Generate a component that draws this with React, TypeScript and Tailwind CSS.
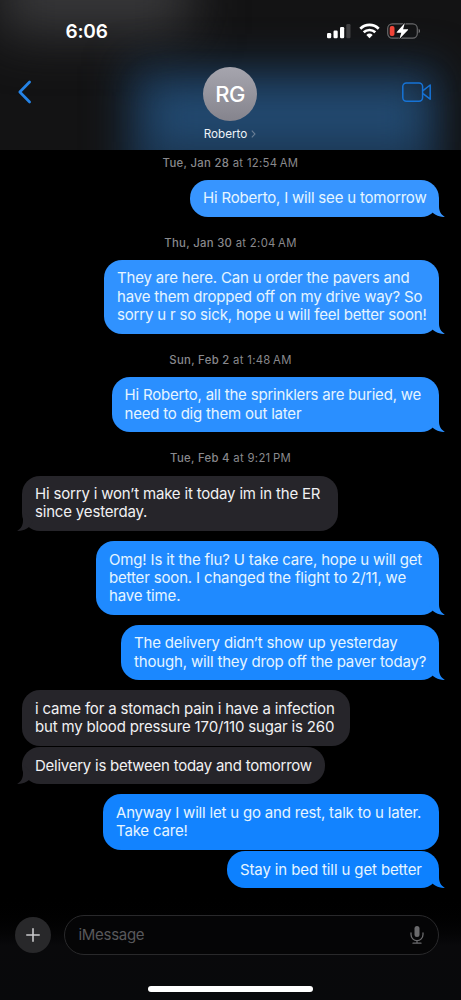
import clsx from "clsx";

// ── Data ────────────────────────────────────────────────────────────────────
type Item =
  | { kind: "stamp"; day: string; time: string; box: string }
  | {
      kind: "msg";
      from: "me" | "them";
      lines: string[];
      box: string; // spacing, size and fill of the bubble
      tail?: boolean;
    };

const thread: Item[] = [
  { kind: "stamp", day: "Tue, Jan 28", time: "at 12:54\u202fAM", box: "mt-[4.8px]" },
  {
    kind: "msg",
    from: "me",
    lines: ["Hi Roberto, I will see u tomorrow"],
    box: "mt-[9px] w-[249px] h-[37.3px] bg-[#3795ff] text-[#3795ff] tracking-[-0.2px]",
    tail: true,
  },
  { kind: "stamp", day: "Thu, Jan 30", time: "at 2:04\u202fAM", box: "mt-[17.5px]" },
  {
    kind: "msg",
    from: "me",
    lines: [
      "They are here. Can u order the pavers and",
      "have them dropped off on my drive way? So",
      "sorry u r so sick, hope u will feel better soon!",
    ],
    box: "mt-[9.4px] w-[335px] h-[73.6px] bg-[#3092ff] text-[#3092ff] tracking-[-0.18px]",
    tail: true,
  },
  { kind: "stamp", day: "Sun, Feb 2", time: "at 1:48\u202fAM", box: "mt-[18px]" },
  {
    kind: "msg",
    from: "me",
    lines: ["Hi Roberto, all the sprinklers are buried, we", "need to dig them out later"],
    box: "mt-[9.4px] w-[327.5px] h-[55.4px] bg-[#2a8fff] text-[#2a8fff] tracking-[-0.2px]",
    tail: true,
  },
  { kind: "stamp", day: "Tue, Feb 4", time: "at 9:21\u202fPM", box: "mt-[17.7px]" },
  {
    kind: "msg",
    from: "them",
    lines: ["Hi sorry i won’t make it today im in the ER", "since yesterday."],
    box: "mt-[9.5px] w-[316px] h-[55.4px] bg-[#26252a] text-[#26252a] tracking-[-0.18px]",
    tail: true,
  },
  {
    kind: "msg",
    from: "me",
    lines: [
      "Omg! Is it the flu? U take care, hope u will get",
      "better soon. I changed the flight to 2/11, we",
      "have time.",
    ],
    box: "mt-[10.3px] w-[343px] h-[73.5px] bg-[#1f8aff] text-[#1f8aff] tracking-[-0.16px]",
    tail: true,
  },
  {
    kind: "msg",
    from: "me",
    lines: ["The delivery didn’t show up yesterday", "though, will they drop off the paver today?"],
    box: "mt-[10.2px] w-[318px] h-[55.4px] bg-[#1b88ff] text-[#1b88ff] tracking-[-0.17px]",
    tail: true,
  },
  {
    kind: "msg",
    from: "them",
    lines: ["i came for a stomach pain i have a infection", "but my blood pressure 170/110 sugar is 260"],
    box: "mt-[9.9px] w-[327.5px] h-[55.4px] bg-[#26252a] text-[#26252a] tracking-[-0.17px]",
  },
  {
    kind: "msg",
    from: "them",
    lines: ["Delivery is between today and tomorrow"],
    box: "mt-[1.6px] w-[303px] h-[37.3px] bg-[#26252a] text-[#26252a] tracking-[-0.25px]",
    tail: true,
  },
  {
    kind: "msg",
    from: "me",
    lines: ["Anyway I will let u go and rest, talk to u later.", "Take care!"],
    box: "mt-[10px] w-[336px] h-[55.2px] bg-[#1283ff] text-[#1283ff] tracking-[-0.19px]",
  },
  {
    kind: "msg",
    from: "me",
    lines: ["Stay in bed till u get better"],
    box: "mt-[1.5px] w-[212px] h-[37.3px] bg-[#0d81ff] text-[#0d81ff] tracking-[-0.12px]",
    tail: true,
  },
];

// ── Icons ───────────────────────────────────────────────────────────────────
function SignalIcon() {
  return (
    <svg width="24" height="17" viewBox="0 0 24 17" fill="#fff">
      <rect x="0" y="11" width="4.2" height="5.2" rx="1.2" />
      <rect x="6.5" y="8.5" width="4.2" height="7.7" rx="1.2" />
      <rect x="13" y="5" width="4.2" height="11.2" rx="1.2" />
      <rect x="19.3" y="2" width="4.2" height="14.2" rx="1.2" fill="#3f3f41" />
    </svg>
  );
}

function WifiIcon() {
  return (
    <svg width="21" height="17" viewBox="0 0 21 17" fill="none" stroke="#fff" strokeWidth="2.7">
      <path d="M1.3 6.7C6.5 1.6 14.5 1.6 19.7 6.7" />
      <path d="M4.7 10.3C8 7.2 13 7.2 16.3 10.3" />
      <path d="M7.3 12.9Q10.5 10.1 13.7 12.9L10.5 16.2Z" fill="#fff" stroke="none" />
    </svg>
  );
}

function BatteryIcon() {
  return (
    <svg width="34" height="18" viewBox="0 0 34 18" fill="none">
      <rect x="0.7" y="1.8" width="29.6" height="14.4" rx="4.6" stroke="#68686a" strokeWidth="1.2" />
      <path d="M31.7 6.8c1.8.7 1.8 3.7 0 4.4z" fill="#79797b" />
      <rect x="2.7" y="4" width="4.8" height="10" rx="2" fill="#f04438" />
      <path
        d="M17.8 1 9.8 9.9c-.3.4-.1.8.4.8h4.1L12.4 17l8.6-9c.3-.4.1-.8-.4-.8h-4.5z"
        fill="#fff"
        stroke="#151517"
        strokeWidth="1.8"
        paintOrder="stroke"
      />
    </svg>
  );
}

function VideoIcon() {
  return (
    <svg width="30" height="21" viewBox="0 0 30 21" fill="none" stroke="#1673d6" strokeWidth="1.5" strokeLinejoin="round">
      <rect x="0.8" y="1" width="19.8" height="18.2" rx="3.6" />
      <path d="M21 8.6 28.2 3V17.2L21 11.6" />
    </svg>
  );
}

function MicIcon() {
  return (
    <svg width="14" height="20" viewBox="0 0 14 20" fill="none" stroke="#6a6a6c" strokeWidth="1.3" strokeLinecap="round">
      <rect x="4.5" y="1" width="5" height="11" rx="2.5" fill="#6a6a6c" stroke="none" />
      <path d="M1 8v1.6a6 6 0 0 0 12 0V8M7 15.6v2.6M3 18.2h8" />
    </svg>
  );
}

// ── Thread ──────────────────────────────────────────────────────────────────
function Tail({ side }: { side: "me" | "them" }) {
  return (
    <svg
      width="24"
      height="20"
      viewBox="0 0 24 20"
      fill="currentColor"
      className={clsx("absolute bottom-0", side === "me" ? "-right-[6px]" : "-left-[5px] -scale-x-100")}
    >
      <path d="M18 1V9.5C18 14 20 18 24 19.8 19.5 20.4 15 18.6 12 16L8 10Z" />
    </svg>
  );
}

function Thread() {
  return (
    <main className="flex h-[741px] flex-col px-[22px]">
      {thread.map((item, i) =>
        item.kind === "stamp" ? (
          <div
            key={i}
            className={clsx(
              "h-4 shrink-0 text-center text-[11.3px] leading-4 tracking-[0.32px] whitespace-nowrap text-[#89898d]",
              item.box
            )}
          >
            <span className="font-medium">{item.day}</span> {item.time}
          </div>
        ) : (
          <div
            key={i}
            className={clsx(
              "relative flex shrink-0 flex-col justify-center rounded-[18px] px-[13px]",
              item.from === "me" ? "self-end" : "self-start",
              item.box
            )}
          >
            {item.tail && <Tail side={item.from} />}
            {item.lines.map((line) => (
              <p
                key={line}
                className={clsx(
                  "relative text-[15px] leading-[18.2px] whitespace-nowrap",
                  item.from === "me" ? "text-[#e6f5ff]" : "text-[#f1f1f3]"
                )}
              >
                {line}
              </p>
            ))}
          </div>
        )
      )}
    </main>
  );
}

// ── Header ──────────────────────────────────────────────────────────────────
function Header() {
  return (
    <header className="relative h-[150px] shrink-0 overflow-hidden bg-[#131314]">
      {/* Colour of the content that scrolls under the bar */}
      <div className="absolute -top-12 left-0 h-[82px] w-[190px] bg-[#38383a] blur-[26px]" />
      <div className="absolute top-[66px] left-[126px] h-[150px] w-[314px] bg-[#1b3550] blur-[20px]" />
      <div className="absolute top-[92px] left-[155px] h-[50px] w-[265px] bg-[#25527f]/70 blur-[18px]" />

      <div className="relative flex h-[62px] items-start justify-between pt-[22px] pr-[40px] pl-[65.5px]">
        <span className="text-[19px] leading-[20px] font-semibold tracking-[-0.2px] text-white">6:06</span>
        <div className="flex items-start gap-[7.5px]">
          <SignalIcon />
          <WifiIcon />
          <BatteryIcon />
        </div>
      </div>

      <div className="relative flex items-start justify-between pr-[29px] pl-[17px]">
        <svg width="16" height="24" viewBox="0 0 16 24" fill="none" className="mt-[18px]">
          <path d="M12.6 2 2.8 12l9.8 10" stroke="#2583e6" strokeWidth="2.7" strokeLinecap="round" strokeLinejoin="round" />
        </svg>
        <div className="mt-[5px] ml-[25px] flex flex-col items-center">
          <div className="flex size-[54px] items-center justify-center rounded-full bg-linear-to-b from-[#a6a5ae] to-[#85848d] pt-px text-[22px] font-medium tracking-[-0.6px] text-white">
            RG
          </div>
          <div className="mt-1 flex items-center gap-1 text-[11.7px] leading-[18px] text-[#eef2f7]">
            Roberto
            <svg width="5" height="8" viewBox="0 0 5 8" fill="none" stroke="#697d95" strokeWidth="1.1">
              <path d="M.8.6 4 4 .8 7.4" />
            </svg>
          </div>
        </div>
        <div className="mt-[20px]">
          <VideoIcon />
        </div>
      </div>
    </header>
  );
}

// ── Composer ────────────────────────────────────────────────────────────────
function Composer() {
  return (
    <footer className="flex h-[109px] shrink-0 flex-col items-center bg-linear-to-b from-black via-[#09090b] to-[#08090b]">
      <div className="mt-6 flex w-full items-center gap-[13px] pr-[22px] pl-[15px]">
        <div className="flex size-9 items-center justify-center rounded-full bg-[#28282a]">
          <svg width="14" height="14" viewBox="0 0 14 14" stroke="#c9c9cb" strokeWidth="1.6" strokeLinecap="round">
            <path d="M7 .8v12.4M.8 7h12.4" />
          </svg>
        </div>
        <div className="flex h-10 flex-1 items-center justify-between rounded-full border border-[#29292b] bg-[#050506] pr-[14px] pl-[13.5px]">
          <span className="pt-px text-[15px] tracking-[-0.3px] text-[#58585b]">iMessage</span>
          <MicIcon />
        </div>
      </div>
      <div className="mt-[30.5px] h-[6px] w-[165px] shrink-0 rounded-full bg-white" />
    </footer>
  );
}

export default function App() {
  return (
    <div className="flex h-[1000px] w-[461px] flex-col overflow-hidden bg-black font-['Inter',sans-serif]">
      <Header />
      <Thread />
      <Composer />
    </div>
  );
}
